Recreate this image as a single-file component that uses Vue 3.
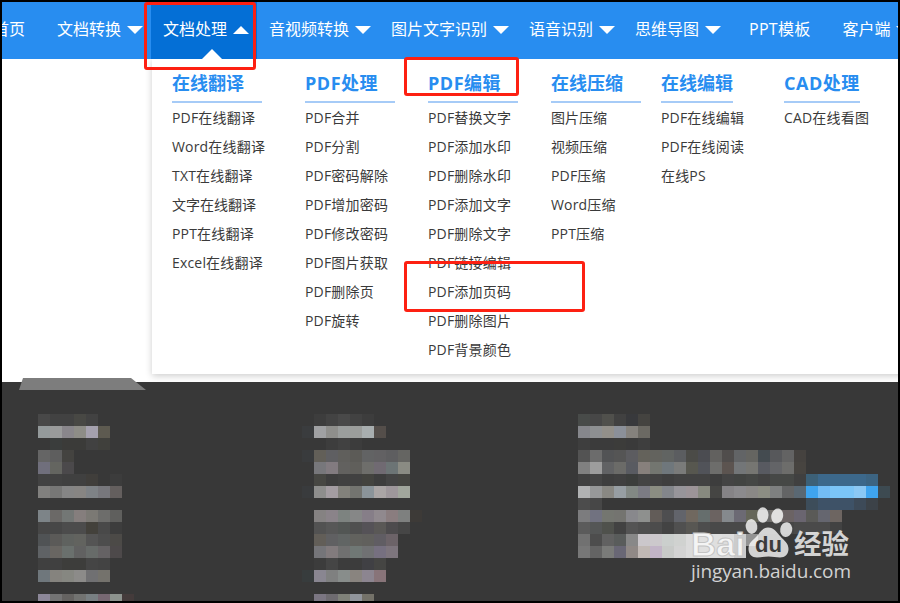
<template>
  <div class="page">
    <nav class="nav">
      <div
        v-for="item in navItems"
        :key="item.label"
        class="nav-item"
        :class="{ active: item.active, plain: !item.arrow, mixed: hasLatin(item.label) }"
      >
        <span>{{ item.label }}</span>
        <i v-if="item.arrow" class="arrow"></i>
        <i v-if="item.active" class="notch"></i>
      </div>
    </nav>

    <div class="content">
      <div class="dropdown">
        <div v-for="col in columns" :key="col.title" class="column">
          <h3
            class="column-title"
            :class="{ mixed: hasLatin(col.title) }"
            :style="{ width: col.width + 'px' }"
          >{{ col.title }}</h3>
          <a
            v-for="link in col.links"
            :key="link"
            class="column-link"
            :class="{ mixed: hasLatin(link) }"
          >{{ link }}</a>
        </div>
      </div>
    </div>

    <footer class="footer">
      <svg class="tab" width="128" height="12" viewBox="0 0 128 12">
        <path d="M4 0H112L127 12H0Z" fill="#7d7d7d" />
      </svg>
      <svg class="mosaic" width="896" height="187" viewBox="2 414 896 187" shape-rendering="crispEdges">
        <rect
          v-for="cell in cells"
          :key="cell.id"
          :x="cell.x"
          :y="cell.y"
          width="12"
          height="12"
          :fill="cell.fill"
        />
      </svg>
    </footer>

    <svg class="watermark" width="176" height="84" viewBox="684 504 176 84">
      <text x="691" y="556" class="logo outlined" font-size="34" textLength="54" lengthAdjust="spacingAndGlyphs">Bai</text>
      <g fill="#fff" fill-opacity="0.78">
        <ellipse cx="751.5" cy="526.5" rx="5.8" ry="7.4" transform="rotate(-8 751.5 526.5)" />
        <ellipse cx="762.8" cy="515" rx="5.7" ry="7.8" />
        <ellipse cx="777.2" cy="516" rx="5.9" ry="7.6" transform="rotate(12 777.2 516)" />
        <ellipse cx="786.2" cy="529.6" rx="6" ry="7.4" transform="rotate(8 786.2 529.6)" />
        <path d="M768 527.5C762 527.5 760 533 756 537C752 541 748.500 543 748.500 549C748.500 554 752 557.500 757 557.500C761 557.500 764 556.500 768.500 556.500C773 556.500 776 557.500 780 557.500C785 557.500 788.500 554 788.500 549C788.500 543 784 540.500 780.500 536.500C777 532.500 774 527.500 768 527.500Z" />
        <text x="794" y="553.5" class="cn" font-size="27" textLength="55" lengthAdjust="spacingAndGlyphs">经验</text>
        <text x="691" y="577.5" class="site" font-size="19" textLength="160">jingyan.baidu.com</text>
      </g>
      <text x="755" y="552" class="logo" font-size="22" fill="#3b3b3b" textLength="27" lengthAdjust="spacingAndGlyphs">du</text>
    </svg>

    <div class="mark mark-nav"></div>
    <div class="mark mark-title"></div>
    <div class="mark mark-link"></div>
  </div>
</template>

<script setup>
import { computed } from 'vue';

const navItems = [
  { label: '首页' },
  { label: '文档转换', arrow: true },
  { label: '文档处理', arrow: true, active: true },
  { label: '音视频转换', arrow: true },
  { label: '图片文字识别', arrow: true },
  { label: '语音识别', arrow: true },
  { label: '思维导图', arrow: true },
  { label: 'PPT模板' },
  { label: '客户端', arrow: true },
];

const columns = [
  {
    title: '在线翻译',
    width: 90,
    links: ['PDF在线翻译', 'Word在线翻译', 'TXT在线翻译', '文字在线翻译', 'PPT在线翻译', 'Excel在线翻译'],
  },
  {
    title: 'PDF处理',
    width: 90,
    links: ['PDF合并', 'PDF分割', 'PDF密码解除', 'PDF增加密码', 'PDF修改密码', 'PDF图片获取', 'PDF删除页', 'PDF旋转'],
  },
  {
    title: 'PDF编辑',
    width: 90,
    links: [
      'PDF替换文字', 'PDF添加水印', 'PDF删除水印', 'PDF添加文字', 'PDF删除文字',
      'PDF链接编辑', 'PDF添加页码', 'PDF删除图片', 'PDF背景颜色',
    ],
  },
  {
    title: '在线压缩',
    width: 90,
    links: ['图片压缩', '视频压缩', 'PDF压缩', 'Word压缩', 'PPT压缩'],
  },
  {
    title: '在线编辑',
    width: 72,
    links: ['PDF在线编辑', 'PDF在线阅读', '在线PS'],
  },
  {
    title: 'CAD处理',
    width: 76,
    links: ['CAD在线看图'],
  },
];

const hasLatin = (text) => /[A-Za-z]/.test(text);

// one string per 12px row, one colour per cell, '.' is an empty cell
const blocks = [
  {
    x: 38,
    rows: [
      '484848 424242 424242 484844 424242',
      '949a9b 9a9b9b 89868b 8e8d87 a5a1ae 5d5a50',
      '. 3a3d3c 3b3b39 3b3b39 414141 40403c',
      '656565 5e5e5e 444340',
      '706f7c 646560 4b494b',
      '424242 424242 404040 404040 403e3b . 3c3c3c',
      '81807e 777776 858585 878583 7e8286 77777c 645f5e',
      '',
      '7d8488 6b6967 737775 857e7d 7b7974 6d6d6b 5f5f5d',
      '474747 474747 4c4c4c 4c4c4c 43413b 494949 3d3d3d',
      '505355 5b5a58 5f625f 62635f 545454 4d4d4d 4c4a47',
      '5f6265 696662 6a706d 616161 676b69 656264 4d494a',
      '404040 404040 3d3d3b 3d3d3b 454545 434343',
      '6f777c 85837e 868781 8c8b89 707072 74726c',
      '',
      '8c8798 747474 656361 727371 787f82 776872 8c928d 443b3b',
    ],
  },
  {
    x: 302,
    rows: [
      '. 3d3d3d 434343 494949 424242 3d3d3d',
      '3a3c3e a0a1a3 8f8f8c 9b9e9d 9b9d9b a8aeaf 544e4a',
      '. . 3d3d3d 414141 3c3c3c',
      '393b3d 625f58 5f5f62 605f5c 5c5b57 626364 626163 5e5e60 656562',
      '. 77777b 827b80 62615f 605f5b 6e6e6b 706a72 6c7475 8a8b83',
      '. 474743 3e3e3e 414141 414141 43433f 3d3d3d 444444 454541',
      '393b3d 8e8e8d a49da2 82817b 737470 8b949a aaa5a5 9e979b a1a69c',
      '',
      '. 858282 8a8389 7d8380 868787 867e88 90898e 8a7d7f 7e807f 3d3a37',
      '. 525252 575757 525654 505050 555257 5a5856 4d4b4d 464646',
      '. 625e58 606062 616564 62625e 61605d 605d63 6c6368',
      '. 757579 827b7d 707070 707875 707173 767080 7d757d',
      '. 3c3c3c 454545 3c3c3c 3c3c3c 404044 454543',
      '373c3d 898691 7f8080 888d8b 89847f 8c8590 887479',
      '',
      '. 7b7682 6e6b70 7f8179 91959c 747269',
    ],
  },
  {
    x: 578,
    rows: [
      '484b49 474747 50504c 414141 38393c 444340',
      '86878c 8e9092 93908a 8b9099 85827d 6b6963',
      '3e3e3e 3b3b3b 3b3b3b 3c3c3a 3a3a3a 3e3e3e',
      '535353 6c6c6c 525355 555555 5c5c60 64625b 63635e 616462 5b5d60 4b4b47 4b4c51 62615f 504d4c 626466 656561 444b50 57585b 636363 45423f',
      '808080 9d9d9d 616264 6b6b68 595b61 87807c 737670 6f777c 7a7b7a 57574f 515359 6d6d6b 5c5450 737678 767672 585a61 636467 6d6d6b 474440',
      '404040 454545 3e3e3e 404040 3c3e3c 444444 424242 3f3f3f 424242 424242 424242 3d3d3d 444444 424442 454745 424242 464846 464846 404040 3c6077 3c688b 3c688b 3c688b 3c688b 3c6482',
      'b1b2b3 979899 898883 979ea3 828884 7b7b83 8b8d82 83868b 97959a 9c9498 87897f 454543 858386 8b8a8d 8a8886 8c8d83 7e8080 636465 5a6873 3fa4ee 73bcf4 7bc5f7 7bc5f7 8bc8f4 3fa4ee 3d4a51',
      '4c4c4c 474747 . . . . . . . . . . . . . . . . . 3d4d5a 3e5267 3e5267 3e5267 3d4a58 3c4248',
      '7c7c7e 717280 747670 747470 88888c 8e908e 625c58 4e4e50 62646b 70685f 666e6d 6b6361 85898d 6c6a74 656659 6b6b6b 75726e 6b6364 6a6570 5a5a57 65666f 6d6561',
      '5b5b5b 545656 4f514c 424242 545454 4f4f4f 4c4c4c 434343 505050 585753 4d4d4d 494949 494949 494949 454545 424242 424242 464646 4a4a4a 4a4a4a 4a4a4a 424242',
      '717171 4d4d4d 616161 595c5b 888888 cbc7cb ccc8cc cbcfcd d0d2d0 dbdbdb e1e1e1 dfdfdf dddddd cccccc 939393',
      '777777 646464 7a7b79 696775 908986 c1b9b5 c2b4c7 c8cac8 d3d3d3 dbdbdb e0e0e0 dfdfdf dcdcdc cccccc',
    ],
  },
];

const cells = computed(() => {
  const list = [];
  blocks.forEach((block) => {
    block.rows.forEach((row, r) => {
      row.split(' ').forEach((color, c) => {
        if (color && color !== '.') {
          list.push({
            id: `${block.x}-${r}-${c}`,
            x: block.x + c * 12,
            y: 414 + r * 12,
            fill: '#' + color,
          });
        }
      });
    });
  });
  return list;
});
</script>

<style>
body {
  margin: 0;
  overflow: hidden;
}
</style>

<style scoped>
.page {
  position: relative;
  display: flex;
  flex-direction: column;
  width: 900px;
  height: 603px;
  box-sizing: border-box;
  border: 2px solid #000;
  overflow: hidden;
  background: #fff;
  font-family: "Open Sans", "Noto Sans CJK SC", sans-serif;
}

.nav {
  display: flex;
  flex: none;
  height: 57px;
  margin-left: -29px;
  background: #288df0;
}

.nav-item {
  position: relative;
  display: flex;
  flex: none;
  align-items: center;
  box-sizing: border-box;
  height: 57px;
  padding: 0 8px 2px 12px;
  color: #fff;
  font-size: 16px;
  line-height: 24px;
  white-space: nowrap;
}

.nav-item span {
  padding-bottom: 2px;
}

.nav-item.plain {
  padding: 0 20px 2px;
}

.nav-item.mixed {
  letter-spacing: 0.25px;
}

.nav-item.active {
  background: #046fd6;
}

.arrow {
  margin-left: 6px;
  border: 8px solid transparent;
  border-top-color: #fff;
  border-bottom: 0;
}

.active .arrow {
  border-top: 0;
  border-bottom: 8px solid #fff;
}

.notch {
  position: absolute;
  left: 51px;
  bottom: 0;
  border: 10px solid transparent;
  border-top: 0;
  border-bottom-color: #fff;
}

.content {
  flex: none;
  height: 323px;
  overflow: hidden;
}

.dropdown {
  display: grid;
  grid-template-columns: 133px 123px 123px 110px 123px 1fr;
  box-sizing: border-box;
  width: 780px;
  height: 315px;
  margin-left: 150px;
  padding: 8px 0 0 20px;
  background: #fff;
  box-shadow: 0 2px 7px rgba(0, 0, 0, 0.2);
}

.column {
  display: flex;
  flex-direction: column;
}

.column-title {
  height: 34px;
  margin: 0;
  border-bottom: 2px solid #a6cbf7;
  color: #288df0;
  font-size: 18px;
  font-weight: 700;
  line-height: 33px;
  white-space: nowrap;
}

.column-title.mixed {
  letter-spacing: 0.5px;
}

.column-link {
  height: 29px;
  color: #3a3a3a;
  font-size: 14px;
  line-height: 29px;
  white-space: nowrap;
}

.column-link.mixed {
  letter-spacing: 0.18px;
}

.footer {
  position: relative;
  flex: none;
  height: 219px;
  padding-top: 32px;
  box-sizing: border-box;
  background: #383838;
}

.tab {
  position: absolute;
  left: 17px;
  top: -4px;
}

.mosaic {
  display: block;
}

.watermark {
  position: absolute;
  left: 682px;
  top: 502px;
}

.logo {
  font-family: "Liberation Sans", sans-serif;
  font-weight: 700;
}

.outlined {
  fill: #f4f4f4;
  stroke: #c4c4c4;
  stroke-width: 1px;
}

.cn {
  font-family: "Noto Sans CJK SC", sans-serif;
  font-weight: 700;
}

.site {
  font-family: "Open Sans", "Noto Sans", sans-serif;
  font-weight: 500;
}

.mark {
  position: absolute;
  box-sizing: border-box;
  border: 3px solid #fd2012;
  border-radius: 3px;
}

.mark-nav {
  left: 142px;
  top: 0;
  width: 112px;
  height: 68px;
}

.mark-title {
  left: 402px;
  top: 55px;
  width: 115px;
  height: 39px;
}

.mark-link {
  left: 402px;
  top: 259px;
  width: 181px;
  height: 51px;
}
</style>
